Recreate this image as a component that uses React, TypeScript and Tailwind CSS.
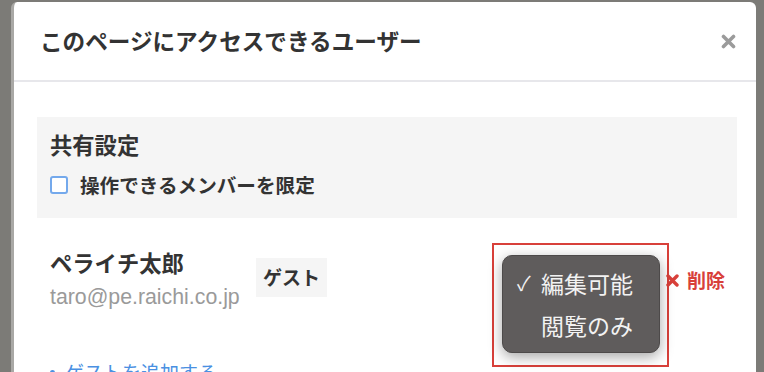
import React from 'react';

const jp = { fontFamily: '"Noto Sans CJK JP", "Noto Sans", sans-serif' };

const CloseIcon: React.FC = () => (
  <svg width="15" height="15" viewBox="0 0 15 15">
    <path d="M2.5 2.5 L12.5 12.5 M12.5 2.5 L2.5 12.5" stroke="#9b9b9b" strokeWidth="3.6" strokeLinecap="round" />
  </svg>
);

const RedX: React.FC = () => (
  <svg width="13" height="13" viewBox="0 0 13 13">
    <path d="M2 2 L11 11 M11 2 L2 11" stroke="#d8403a" strokeWidth="3.4" strokeLinecap="round" />
  </svg>
);

const RoleMenu: React.FC = () => (
  <div className="absolute left-[455px] top-[-3px] w-[177px] h-[124px] border-2 border-[#d8403a] pl-[8px] pt-[10px]">
    <div className="w-[158px] h-[98px] rounded-[10px] bg-[#5f5c5c] border border-[#4d4a4a] shadow-[0_4px_14px_rgba(0,0,0,0.35)] flex flex-col text-[#f2f2f2] text-[23px] leading-[42px] pt-[6px]">
      <div className="flex items-center">
        <span className="w-[38px] pl-[14px] text-[20px]">✓</span>
        <span>編集可能</span>
      </div>
      <div className="flex items-center">
        <span className="w-[38px]" />
        <span>閲覧のみ</span>
      </div>
    </div>
  </div>
);

const App: React.FC = () => {
  return (
    <div className="w-[764px] h-[372px] overflow-hidden bg-[#7c7b77] pt-[2px] pl-[11px] pr-[8px]" style={jp}>
      <div className="h-full bg-white rounded-t-[6px] border-l-[3px] border-[#a9a8a5] flex flex-col">
        <div className="shrink-0 h-[80px] flex items-center pl-[26px] pr-[20px] border-b-2 border-[#e7e7eb]">
          <h1 className="text-[22.6px] font-bold text-[#333333]">このページにアクセスできるユーザー</h1>
          <button className="ml-auto">
            <CloseIcon />
          </button>
        </div>
        <div className="shrink-0 pl-[23px] pr-[19px] pt-[35px] flex flex-col">
          <div className="shrink-0 bg-[#f5f5f5] h-[101px] px-[13px] pt-[10px] flex flex-col">
            <h2 className="text-[22.3px] font-bold text-[#333333] leading-[34px]">共有設定</h2>
            <label className="flex items-center mt-[10px] gap-[12px]">
              <span className="w-[18px] h-[18px] rounded-[3px] border-2 border-[#74a9ec] bg-white" />
              <span className="text-[19.6px] font-bold text-[#333333] leading-[28px]">操作できるメンバーを限定</span>
            </label>
          </div>
          <div className="shrink-0 relative flex items-start mt-[28px] pl-[13px] pr-[12px]">
            <div className="w-[206px] flex flex-col">
              <span className="text-[22.3px] font-bold text-[#333333] leading-[32px]">ペライチ太郎</span>
              <span
                className="mt-[4px] text-[21.3px] text-[#9a9a9a] leading-[30px]"
                style={{ fontFamily: '"Liberation Sans", Arial, sans-serif' }}
              >
                taro@pe.raichi.co.jp
              </span>
            </div>
            <span className="mt-[12px] h-[39px] px-[7px] bg-[#f5f5f5] flex items-center text-[19px] font-bold text-[#333333]">
              ゲスト
            </span>
            <RoleMenu />
            <button className="ml-auto mt-[20px] flex items-center gap-[8px] text-[19px] font-bold text-[#d8403a] leading-[28px]">
              <RedX />
              削除
            </button>
          </div>
          <div className="shrink-0 mt-[46px] pl-[13px] flex items-center gap-[10px] text-[19px] text-[#4a90e2] leading-[28px]">
            <span className="w-[5px] h-[5px] rounded-full bg-[#4a90e2]" />
            ゲストを追加する
          </div>
        </div>
      </div>
    </div>
  );
};

export default App;
